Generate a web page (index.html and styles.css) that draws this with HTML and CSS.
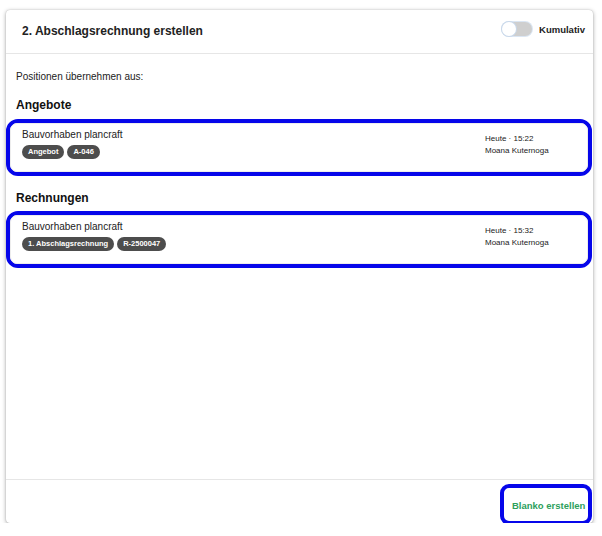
FILE: index.html
```html
<!DOCTYPE html>
<html lang="de">
<head>
<meta charset="utf-8">
<title>Abschlagsrechnung</title>
<link rel="stylesheet" href="styles.css">
</head>
<body>
<div class="dialog">
  <div class="header">
    <div class="title">2. Abschlagsrechnung erstellen</div>
    <div class="toggle-wrap">
      <span class="toggle"><span class="knob"></span></span>
      <span class="toggle-label">Kumulativ</span>
    </div>
  </div>
  <div class="body">
    <div class="intro">Positionen übernehmen aus:</div>
    <div class="section-title">Angebote</div>
    <div class="hl">
      <div class="card">
        <div class="card-main">
          <div class="card-title">Bauvorhaben plancraft</div>
          <div class="badges">
            <span class="badge">Angebot</span>
            <span class="badge">A-046</span>
          </div>
        </div>
        <div class="card-meta">
          <div>Heute · 15:22</div>
          <div>Moana Kuternoga</div>
        </div>
      </div>
    </div>
    <div class="section-title second">Rechnungen</div>
    <div class="hl">
      <div class="card">
        <div class="card-main">
          <div class="card-title">Bauvorhaben plancraft</div>
          <div class="badges">
            <span class="badge">1. Abschlagsrechnung</span>
            <span class="badge">R-2500047</span>
          </div>
        </div>
        <div class="card-meta">
          <div>Heute · 15:32</div>
          <div>Moana Kuternoga</div>
        </div>
      </div>
    </div>
  </div>
  <div class="footer">
    <button class="blank-btn">Blanko erstellen</button>
  </div>
</div>
</body>
</html>
```

FILE: styles.css
```css
* { box-sizing: border-box; }
html, body {
  margin: 0;
  padding: 0;
  background: #ffffff;
  font-family: "Liberation Sans", Arial, Helvetica, sans-serif;
  color: #1a1a1a;
}
body {
  padding: 10px 9px 0 6px;
}
.dialog {
  width: 587px;
  height: 513px;
  background: #fff;
  border-radius: 4px;
  box-shadow: 0 1px 4px rgba(0,0,0,0.35), 0 0 1px rgba(0,0,0,0.25);
  display: flex;
  flex-direction: column;
}
.header {
  height: 44px;
  border-bottom: 1px solid #e6e6e6;
  display: flex;
  align-items: center;
  justify-content: space-between;
  padding: 0 8px 0 16px;
  flex: none;
}
.title {
  font-size: 12px;
  font-weight: bold;
  color: #222;
  margin-top: -2px;
}
.toggle-wrap {
  display: flex;
  align-items: center;
  gap: 7px;
  margin-top: -5px;
}
.toggle {
  width: 30px;
  height: 14px;
  border-radius: 7px;
  background: #cfcfcf;
  position: relative;
  box-shadow: 0 0 0 1px #dbe6f3;
}
.knob {
  position: absolute;
  left: 0;
  top: 0;
  width: 14px;
  height: 14px;
  border-radius: 50%;
  background: #fff;
  box-shadow: 0 0 0 1px #c9d8ea;
}
.toggle-label {
  font-size: 9.5px;
  font-weight: bold;
  color: #222;
}
.body {
  flex: 1;
  padding: 16px 10px 0 10px;
}
.intro {
  font-size: 10px;
  line-height: 13px;
  color: #222;
}
.section-title {
  font-size: 12px;
  line-height: 15px;
  font-weight: bold;
  color: #111;
  margin-top: 15px;
  margin-bottom: 6px;
}
.section-title.second {
  margin-top: 15px;
  margin-bottom: 5px;
}
.hl {
  margin: 0 -9px 0 -10px;
  border: 4px solid #0606ea;
  border-radius: 12px;
}
.card {
  border: 1px solid #ededed;
  border-radius: 7px;
  padding: 4px 12px 12px 11px;
  display: flex;
  justify-content: space-between;
  align-items: flex-start;
}
.card-title {
  font-size: 10px;
  line-height: 13px;
  color: #222;
}
.badges {
  display: flex;
  gap: 3px;
  margin-top: 4px;
}
.badge {
  background: #4d4d4d;
  color: #fff;
  font-size: 7.5px;
  font-weight: bold;
  line-height: 14px;
  height: 14px;
  padding: 0 6px;
  border-radius: 7px;
}
.card-meta {
  width: 90px;
  font-size: 8px;
  line-height: 12px;
  color: #222;
  margin-top: 5px;
}
.footer {
  height: 44px;
  border-top: 1px solid #e6e6e6;
  display: flex;
  justify-content: flex-end;
  align-items: flex-start;
  flex: none;
}
.blank-btn {
  margin-top: 4px;
  margin-right: 1px;
  width: 92px;
  height: 41px;
  border: 4px solid #0606ea;
  border-radius: 9px;
  background: #fff;
  color: #2e9f5c;
  font-family: "Liberation Sans", Arial, sans-serif;
  font-size: 9.5px;
  font-weight: bold;
  white-space: nowrap;
  padding: 2px 0 0 8px;
  text-align: left;
}
```
